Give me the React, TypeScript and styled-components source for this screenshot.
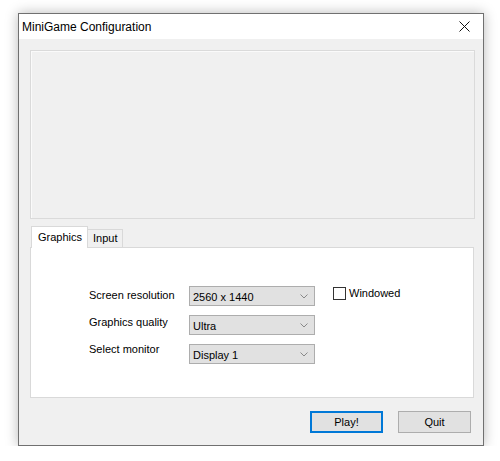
import React, { useState } from 'react'
import styled, { createGlobalStyle } from 'styled-components'

const GlobalStyle = createGlobalStyle`
    html,
    body {
        margin: 0;
        background: #ffffff;
    }
    body {
        font-family: 'Liberation Sans', Arial, sans-serif;
        font-size: 11px;
        color: #000000;
    }
`

const Page = styled.div`
    padding: 13px 0 0 18px;
`

const Window = styled.div`
    width: 466px;
    height: 433px;
    box-sizing: border-box;
    display: flex;
    flex-direction: column;
    background: #f0f0f0;
    border: 1px solid #707070;
    box-shadow: 0 0 12px rgba(0, 0, 0, 0.28);
`

const TitleBar = styled.div`
    height: 25px;
    display: flex;
    align-items: center;
    justify-content: space-between;
    padding-left: 3px;
    background: #ffffff;
    font-size: 12px;
`

const CloseButton = styled.button`
    width: 30px;
    height: 25px;
    display: flex;
    align-items: center;
    justify-content: center;
    padding: 0;
    margin-right: 4px;
    border: none;
    background: transparent;
`

const Content = styled.div`
    flex: 1;
    display: flex;
    flex-direction: column;
    padding: 11px 8px 0 11px;
`

const Preview = styled.div`
    height: 169px;
    box-sizing: border-box;
    border: 1px solid #dadada;
    box-shadow: inset 1px 1px 0 #fafafa;
    background: #f0f0f0;
`

const TabStrip = styled.div`
    height: 21px;
    margin-top: 7px;
    display: flex;
    align-items: flex-end;
    padding-left: 1px;
`

const Tab = styled.div<{ $active?: boolean }>`
    box-sizing: border-box;
    height: ${(p) => (p.$active ? '22px' : '18px')};
    margin-bottom: ${(p) => (p.$active ? '-1px' : '0')};
    margin-left: ${(p) => (p.$active ? '0' : '-1px')};
    padding: ${(p) => (p.$active ? '4px 5px 0 6px' : '2px 4px 0 5px')};
    background: ${(p) => (p.$active ? '#ffffff' : '#f0f0f0')};
    border: 1px solid #d9d9d9;
    border-bottom: none;
    position: relative;
    z-index: ${(p) => (p.$active ? 1 : 0)};
    cursor: default;
`

const TabPanel = styled.div`
    height: 151px;
    box-sizing: border-box;
    margin-right: 1px;
    background: #ffffff;
    border: 1px solid #d9d9d9;
    padding: 38px 0 0 58px;
    display: flex;
`

const LabelColumn = styled.div`
    width: 100px;
    display: flex;
    flex-direction: column;
    gap: 12px;
    padding-top: 2px;
    line-height: 15px;
`

const ComboColumn = styled.div`
    width: 126px;
    display: flex;
    flex-direction: column;
    gap: 9px;
`

const Combo = styled.div`
    height: 20px;
    box-sizing: border-box;
    display: flex;
    align-items: center;
    justify-content: space-between;
    padding: 1px 6px 0 3px;
    background: #e1e1e1;
    border: 1px solid #adadad;
`

const CheckRow = styled.label`
    display: flex;
    align-items: center;
    gap: 3px;
    height: 14px;
    margin: 0 0 0 18px;
`

const CheckBox = styled.span`
    width: 13px;
    height: 13px;
    box-sizing: border-box;
    border: 1px solid #333333;
    background: #ffffff;
`

const Footer = styled.div`
    display: flex;
    justify-content: flex-end;
    gap: 15px;
    padding: 13px 4px 0 0;
`

const Button = styled.button<{ $primary?: boolean }>`
    width: 73px;
    height: 22px;
    box-sizing: border-box;
    padding: 0;
    font-family: inherit;
    font-size: 11px;
    color: #000000;
    background: #e1e1e1;
    border: ${(p) => (p.$primary ? '2px solid #0078d7' : '1px solid #adadad')};
`

const Chevron = () => (
    <svg width='8' height='5' viewBox='0 0 8 5'>
        <polyline points='0.5,0.5 4,4 7.5,0.5' fill='none' stroke='#888888' strokeWidth='1' />
    </svg>
)

const CloseIcon = () => (
    <svg width='11' height='11' viewBox='0 0 11 11'>
        <path d='M0.5 0.5 L10.5 10.5 M10.5 0.5 L0.5 10.5' stroke='#111' strokeWidth='1' />
    </svg>
)

const settings = [
    { label: 'Screen resolution', value: '2560 x 1440' },
    { label: 'Graphics quality', value: 'Ultra' },
    { label: 'Select monitor', value: 'Display 1' },
]

const App = () => {
    const [tab, setTab] = useState('Graphics')

    return (
        <Page>
            <GlobalStyle />
            <Window>
                <TitleBar>
                    <span>MiniGame Configuration</span>
                    <CloseButton aria-label='Close'>
                        <CloseIcon />
                    </CloseButton>
                </TitleBar>
                <Content>
                    <Preview />
                    <TabStrip>
                        {['Graphics', 'Input'].map((name) => (
                            <Tab key={name} $active={tab === name} onClick={() => setTab(name)}>
                                {name}
                            </Tab>
                        ))}
                    </TabStrip>
                    <TabPanel>
                        <LabelColumn>
                            {settings.map((s) => (
                                <span key={s.label}>{s.label}</span>
                            ))}
                        </LabelColumn>
                        <ComboColumn>
                            {settings.map((s) => (
                                <Combo key={s.label}>
                                    <span>{s.value}</span>
                                    <Chevron />
                                </Combo>
                            ))}
                        </ComboColumn>
                        <CheckRow>
                            <CheckBox />
                            <span>Windowed</span>
                        </CheckRow>
                    </TabPanel>
                    <Footer>
                        <Button $primary>Play!</Button>
                        <Button>Quit</Button>
                    </Footer>
                </Content>
            </Window>
        </Page>
    )
}

export default App
